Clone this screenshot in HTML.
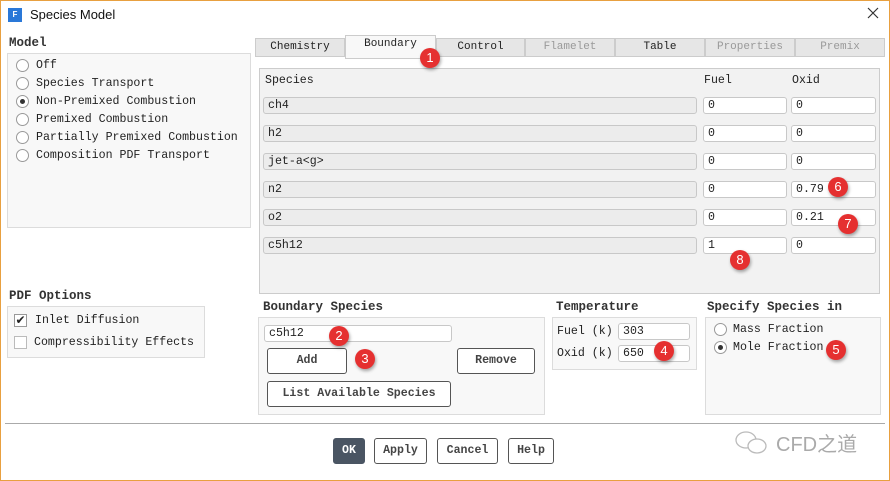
<!DOCTYPE html>
<html><head><style>
*{box-sizing:border-box;margin:0;padding:0}
body{width:890px;height:481px;background:#fff;font-family:"Liberation Mono","DejaVu Sans Mono",monospace;font-size:11.6px;color:#222;position:relative;overflow:hidden}
.a{position:absolute}
.win{left:0;top:0;width:890px;height:481px;border:1px solid #e8a040}
.box{position:absolute;background:#f8f8f8;border:1px solid #dcdcdc}
.h{position:absolute;font-weight:bold;font-size:12.5px;color:#333}
.t{position:absolute;white-space:nowrap}
.rad{position:absolute;width:13px;height:13px;border:1px solid #999;border-radius:50%;background:#fff}
.rad.on::after{content:"";position:absolute;left:3px;top:3px;width:5px;height:5px;border-radius:50%;background:#333}
.fld{position:absolute;height:17px;border:1px solid #c8c8c8;border-radius:3px;background:#fff;padding-left:4px;line-height:16px}
.sp{background:#ececec}
.btn{position:absolute;border:1px solid #555;border-radius:3px;background:#fff;text-align:center;font-weight:bold;color:#444}
.tab{position:absolute;top:38px;height:19px;background:#e6e6e6;border:1px solid #ccc;text-align:center;line-height:17px;font-size:11px;color:#222}
.tab.d{color:#999}
.b{position:absolute;width:20px;height:20px;border-radius:50%;background:#e53030;color:#fff;font-family:"Liberation Sans",sans-serif;font-size:13px;text-align:center;line-height:20px;box-shadow:1px 2px 3px rgba(0,0,0,.35)}
</style></head><body>
<div class="a win"></div>
<div class="a" style="left:8px;top:8px;width:14px;height:14px;background:#2a78d8;color:#fff;font:bold 8px 'Liberation Sans';text-align:center;line-height:14px">F</div>
<div class="t" style="left:30px;top:7px;font-family:'Liberation Sans',sans-serif;font-size:13px;color:#111">Species Model</div>
<svg class="a" style="left:867px;top:7px" width="12" height="12"><path d="M1 1L11 11M11 1L1 11" stroke="#333" stroke-width="1.2"/></svg>

<div class="h" style="left:9px;top:36px">Model</div>
<div class="box" style="left:7px;top:53px;width:244px;height:175px"></div>
<div class="rad" style="left:16px;top:59px"></div><div class="t" style="left:36px;top:59px">Off</div>
<div class="rad" style="left:16px;top:77px"></div><div class="t" style="left:36px;top:77px">Species Transport</div>
<div class="rad on" style="left:16px;top:95px"></div><div class="t" style="left:36px;top:95px">Non-Premixed Combustion</div>
<div class="rad" style="left:16px;top:113px"></div><div class="t" style="left:36px;top:113px">Premixed Combustion</div>
<div class="rad" style="left:16px;top:131px"></div><div class="t" style="left:36px;top:131px">Partially Premixed Combustion</div>
<div class="rad" style="left:16px;top:149px"></div><div class="t" style="left:36px;top:149px">Composition PDF Transport</div>

<div class="h" style="left:9px;top:289px">PDF Options</div>
<div class="box" style="left:7px;top:306px;width:198px;height:52px"></div>
<div class="a" style="left:14px;top:314px;width:13px;height:13px;border:1px solid #999;background:#fff;font:bold 12px 'DejaVu Sans';line-height:11px;text-align:center;color:#222">✔</div>
<div class="t" style="left:35px;top:314px">Inlet Diffusion</div>
<div class="a" style="left:14px;top:336px;width:13px;height:13px;border:1px solid #bbb;background:#fff"></div>
<div class="t" style="left:34px;top:336px">Compressibility Effects</div>

<div class="tab" style="left:255px;width:90px">Chemistry</div>
<div class="tab" style="left:345px;top:35px;height:24px;width:91px;background:#f8f8f8">Boundary</div>
<div class="tab" style="left:436px;width:89px">Control</div>
<div class="tab d" style="left:525px;width:90px">Flamelet</div>
<div class="tab" style="left:615px;width:90px">Table</div>
<div class="tab d" style="left:705px;width:90px">Properties</div>
<div class="tab d" style="left:795px;width:90px">Premix</div>

<div class="box" style="left:259px;top:68px;width:621px;height:226px;background:#f2f2f2;border-color:#ccc"></div>
<div class="t" style="left:265px;top:74px">Species</div>
<div class="t" style="left:704px;top:74px">Fuel</div>
<div class="t" style="left:792px;top:74px">Oxid</div>

<div class="fld sp" style="left:263px;top:97px;width:434px">ch4</div><div class="fld" style="left:703px;top:97px;width:84px">0</div><div class="fld" style="left:791px;top:97px;width:85px">0</div>
<div class="fld sp" style="left:263px;top:125px;width:434px">h2</div><div class="fld" style="left:703px;top:125px;width:84px">0</div><div class="fld" style="left:791px;top:125px;width:85px">0</div>
<div class="fld sp" style="left:263px;top:153px;width:434px">jet-a&lt;g&gt;</div><div class="fld" style="left:703px;top:153px;width:84px">0</div><div class="fld" style="left:791px;top:153px;width:85px">0</div>
<div class="fld sp" style="left:263px;top:181px;width:434px">n2</div><div class="fld" style="left:703px;top:181px;width:84px">0</div><div class="fld" style="left:791px;top:181px;width:85px">0.79</div>
<div class="fld sp" style="left:263px;top:209px;width:434px">o2</div><div class="fld" style="left:703px;top:209px;width:84px">0</div><div class="fld" style="left:791px;top:209px;width:85px">0.21</div>
<div class="fld sp" style="left:263px;top:237px;width:434px">c5h12</div><div class="fld" style="left:703px;top:237px;width:84px">1</div><div class="fld" style="left:791px;top:237px;width:85px">0</div>

<div class="h" style="left:263px;top:300px">Boundary Species</div>
<div class="box" style="left:258px;top:317px;width:287px;height:98px"></div>
<div class="fld" style="left:264px;top:325px;width:188px">c5h12</div>
<div class="btn" style="left:267px;top:348px;width:80px;height:26px;line-height:24px">Add</div>
<div class="btn" style="left:457px;top:348px;width:78px;height:26px;line-height:24px">Remove</div>
<div class="btn" style="left:267px;top:381px;width:184px;height:26px;line-height:24px">List Available Species</div>

<div class="h" style="left:556px;top:300px">Temperature</div>
<div class="box" style="left:552px;top:317px;width:145px;height:53px"></div>
<div class="t" style="left:557px;top:325px">Fuel (k)</div><div class="fld" style="left:618px;top:323px;width:72px">303</div>
<div class="t" style="left:557px;top:347px">Oxid (k)</div><div class="fld" style="left:618px;top:345px;width:72px">650</div>

<div class="h" style="left:707px;top:300px">Specify Species in</div>
<div class="box" style="left:705px;top:317px;width:176px;height:98px"></div>
<div class="rad" style="left:714px;top:323px"></div><div class="t" style="left:733px;top:323px">Mass Fraction</div>
<div class="rad on" style="left:714px;top:341px"></div><div class="t" style="left:733px;top:341px">Mole Fraction</div>

<div class="a" style="left:5px;top:423px;width:880px;height:1px;background:#aaa"></div>
<div class="btn" style="left:333px;top:438px;width:32px;height:26px;line-height:24px;background:#4a5563;color:#fff;border-color:#4a5563">OK</div>
<div class="btn" style="left:374px;top:438px;width:53px;height:26px;line-height:24px">Apply</div>
<div class="btn" style="left:437px;top:438px;width:61px;height:26px;line-height:24px">Cancel</div>
<div class="btn" style="left:508px;top:438px;width:46px;height:26px;line-height:24px">Help</div>
<svg class="a" style="left:733px;top:428px" width="40" height="30"><ellipse cx="13" cy="12" rx="10" ry="8" fill="none" stroke="#bbb" stroke-width="1.3"/><ellipse cx="24" cy="18" rx="9" ry="7" fill="#fff" stroke="#bbb" stroke-width="1.3"/></svg>
<div class="t" style="left:776px;top:428px;font-family:'Liberation Sans','Noto Sans CJK SC',sans-serif;font-size:20px;color:#aaa">CFD之道</div>

<div class="b" style="left:420px;top:48px">1</div>
<div class="b" style="left:329px;top:326px">2</div>
<div class="b" style="left:355px;top:349px">3</div>
<div class="b" style="left:654px;top:341px">4</div>
<div class="b" style="left:826px;top:340px">5</div>
<div class="b" style="left:828px;top:177px">6</div>
<div class="b" style="left:838px;top:214px">7</div>
<div class="b" style="left:730px;top:250px">8</div>
</body></html>
